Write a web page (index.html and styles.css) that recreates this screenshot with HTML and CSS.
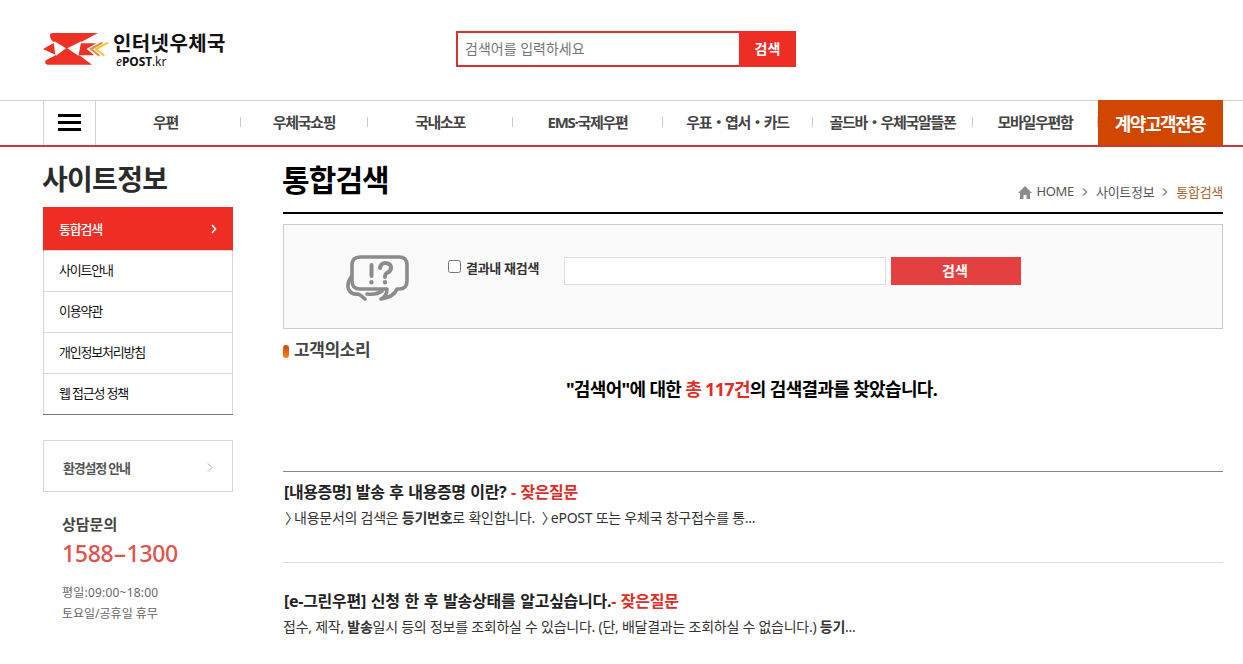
FILE: index.html
```
<!DOCTYPE html>
<html lang="ko">
<head>
    <meta charset="UTF-8">
    <meta name="viewport" content="width=device-width, initial-scale=1.0">
    <title>통합검색 - 인터넷우체국</title>
    <link rel="stylesheet" href="styles.css">
</head>
<body>
    <div class="header">
        <a class="logo" href="#">
            <svg class="logo-mark" viewBox="39 36 198 102" width="66" height="34">
                <path d="M66 39H204L152 67L110 88L66 62Q58 50 60 43Z" fill="#ee3124"/>
                <path d="M110 82L150 107L186 134H52Q42 131 47 121L74 107Z" fill="#ee3124"/>
                <path d="M39 87L71 69L76 104Z" fill="#ee3124"/>
                <path d="M150 70H200L174 87L192 106H146Z" fill="#ee3124"/>
                <path d="M73 64L108 85L78 107ZM154 64L112 85L145 107Z" fill="#fff"/>
                <path d="M206 68L173 87L198 106" fill="none" stroke="#fff" stroke-width="4"/>
                <path d="M217 68L183 87L208 107" fill="none" stroke="#f0803a" stroke-width="6"/>
                <path d="M234 68L198 87L223 107" fill="none" stroke="#f9c72d" stroke-width="6"/>
            </svg>
            <span class="logo-text">
                <b class="logo-name">인터넷우체국</b>
                <span class="logo-sub"><i>e</i><b>POST</b>.kr</span>
            </span>
        </a>
        <form class="top-search">
            <input type="text" placeholder="검색어를 입력하세요">
            <button type="button">검색</button>
        </form>
    </div>

    <div class="navbar">
        <a class="nav-all" href="#"><span></span><span></span><span></span></a>
        <a class="nav-first" href="#">우편</a>
        <a href="#">우체국쇼핑</a>
        <a href="#">국내소포</a>
        <a href="#">EMS·국제우편</a>
        <a href="#">우표・엽서・카드</a>
        <a href="#">골드바・우체국알뜰폰</a>
        <a href="#">모바일우편함</a>
        <a class="nav-contract" href="#">계약고객전용</a>
    </div>

    <div class="container">
        <div class="sidebar">
            <h2>사이트정보</h2>
            <ul class="side-menu">
                <li class="active"><a href="#">통합검색</a>
                    <svg width="6" height="10" viewBox="0 0 6 10"><path d="M1 1L4.5 5L1 9" fill="none" stroke="#fff" stroke-width="1.6"/></svg>
                </li>
                <li><a href="#">사이트안내</a></li>
                <li><a href="#">이용약관</a></li>
                <li><a href="#">개인정보처리방침</a></li>
                <li><a href="#">웹 접근성 정책</a></li>
            </ul>
            <a class="setting" href="#">환경설정 안내
                <svg width="6" height="9" viewBox="0 0 6 9"><path d="M1 .5L5 4.5L1 8.5" fill="none" stroke="#aaa"/></svg>
            </a>
            <div class="contact">
                <strong>상담문의</strong>
                <p class="tel">1588<span>-</span>1300</p>
                <p class="hours">평일:09:00~18:00</p>
                <p>토요일/공휴일 휴무</p>
            </div>
        </div>

        <div class="content">
            <div class="page-head">
                <h1>통합검색</h1>
                <div class="breadcrumb">
                    <svg class="home" width="14" height="13" viewBox="0 0 14 13"><path d="M7 0L14 7H12V13H8.5V9H5.5V13H2V7H0Z" fill="#8c8c8c"/></svg>
                    <a href="#">HOME</a>
                    <svg class="arrow" width="6" height="8" viewBox="0 0 6 8"><path d="M1 .7L4.5 4L1 7.3" fill="none" stroke="#999" stroke-width="1.7"/></svg>
                    <a href="#">사이트정보</a>
                    <svg class="arrow" width="6" height="8" viewBox="0 0 6 8"><path d="M1 .7L4.5 4L1 7.3" fill="none" stroke="#999" stroke-width="1.7"/></svg>
                    <a class="current" href="#">통합검색</a>
                </div>
            </div>

            <form class="search-box">
                <svg class="talk" width="64" height="48" viewBox="0 0 64 48" fill="none" stroke="#8c8c8c" stroke-width="3.6" stroke-linecap="round" stroke-linejoin="round">
                    <path d="M14 2H53Q61 2 61 10V26Q61 34 53 34H51Q48 42 35 44Q41 41 41 34H14Q6 34 6 26V10Q6 2 14 2Z"/>
                    <path d="M5 22Q0 30 3 35Q6 40 12 39Q15 40 19 44M21 39Q31 40 36 36"/>
                    <path d="M25.500 10V21" stroke-width="4"/>
                    <path d="M34 13Q35 8 39 8Q45 8 45 13Q45 16 41 18Q39 19 39 22" stroke-width="4"/>
                    <path d="M25.500 27.200V27.300M39 27.200V27.300" stroke-width="4.400"/>
                </svg>
                <label><input type="checkbox"> 결과내 재검색</label>
                <input class="keyword" type="text">
                <button type="button">검색</button>
            </form>

            <h3>고객의소리</h3>
            <p class="summary">"검색어"에 대한 <em>총 117건</em>의 검색결과를 찾았습니다.</p>

            <div class="result">
                <h4>[내용증명] 발송 후 내용증명 이란?<em> - 잦은질문</em></h4>
                <p class="guide"><span>〉</span>내용문서의 검색은 <b>등기번호</b>로 확인합니다. &nbsp;<span>〉</span>ePOST 또는 우체국 창구접수를 통...</p>
            </div>
            <div class="result">
                <h4>[e-그린우편] 신청 한 후 발송상태를 알고싶습니다.<em>- 잦은질문</em></h4>
                <p>접수, 제작, <b>발송</b>일시 등의 정보를 조회하실 수 있습니다. (단, 배달결과는 조회하실 수 없습니다.) <b>등기</b>...</p>
            </div>
        </div>
    </div>
</body>
</html>
```
FILE: styles.css
```
* {
    box-sizing: border-box;
}

body {
    margin: 0;
    font-family: "Noto Sans", "Noto Sans CJK KR", sans-serif;
    font-size: 13px;
    color: #333;
    background-color: #fff;
    overflow: hidden;
}

h1, h2, h3, h4, p, ul {
    margin: 0;
    padding: 0;
}

a {
    color: inherit;
    text-decoration: none;
}

em {
    font-style: normal;
    color: #e02d27;
}

button, input {
    font-family: inherit;
}

/* Header */
.header {
    display: flex;
    height: 100px;
    padding: 31px 0 0 43px;
}

.logo {
    display: flex;
    width: 413px;
    padding-top: 1px;
    color: #111;
}

.logo-text {
    margin-left: 4px;
}

.logo-name {
    display: block;
    font-size: 20px;
    line-height: 23px;
    letter-spacing: 0.4px;
}

.logo-sub {
    display: block;
    margin-left: 3px;
    font-size: 12px;
    line-height: 13px;
    letter-spacing: -0.1px;
}

.top-search {
    display: flex;
    width: 340px;
    height: 36px;
}

.top-search input {
    width: 283px;
    padding: 0 7px 2px;
    border: 2px solid #dc322d;
    border-right: 0;
    font-size: 14px;
}

.top-search input::placeholder {
    color: #757575;
}

.top-search button {
    width: 57px;
    padding: 0 0 2px;
    border: 0;
    background-color: #ee2e24;
    color: #fff;
    font-size: 14px;
    font-weight: bold;
}

/* Navigation */
.navbar {
    display: grid;
    grid-template-columns: 53px 145px 127px 145px 150px 150px 160px 125px 125px;
    height: 47px;
    padding-left: 43px;
    border-top: 1px solid #d2d2d2;
    border-bottom: 2px solid #c93a36;
}

.navbar a {
    display: flex;
    align-items: center;
    justify-content: center;
    padding: 0 1px 4px 0;
    background: linear-gradient(#ccc, #ccc) no-repeat right 16px / 1px 10px;
    font-size: 15px;
    font-weight: bold;
    letter-spacing: -1.3px;
    color: #444;
    white-space: nowrap;
}

.navbar .nav-first {
    padding-right: 6px;
}

.navbar .nav-all {
    flex-direction: column;
    gap: 4px;
    padding: 0 0 1px;
    border: 1px solid #d2d2d2;
    border-width: 0 1px;
    background: none;
}

.nav-all span {
    width: 23px;
    height: 3px;
    background-color: #000;
}

.navbar .nav-contract {
    margin: -1px 0 0;
    padding: 0 1px 0 0;
    background: #d14600;
    color: #fff;
    font-size: 18px;
    letter-spacing: -1.5px;
}

/* Page body */
.container {
    display: flex;
    gap: 50px;
    padding: 14px 20px 0 43px;
}

.sidebar {
    width: 190px;
}

.sidebar h2 {
    height: 46px;
    margin-left: -1px;
    font-size: 28px;
    line-height: 36px;
    letter-spacing: -0.7px;
    color: #2b2b2b;
}

.side-menu {
    list-style: none;
    border-bottom: 1px solid #777;
}

.side-menu li {
    display: flex;
    align-items: center;
    justify-content: space-between;
    height: 41px;
    padding: 0 15px 3px;
    border: 1px solid #d7d7d7;
    border-width: 0 1px 1px;
    color: #111;
    letter-spacing: -1.2px;
}

.side-menu li:last-child {
    height: 40px;
    border-bottom: 0;
}

.side-menu .active {
    height: 44px;
    padding-bottom: 0;
    border-color: #ee2e24 #ee2e24 #d7d7d7;
    background: #ee2e24 padding-box;
    color: #fff;
    font-weight: 500;
}

.setting {
    display: flex;
    align-items: center;
    justify-content: space-between;
    height: 52px;
    margin-top: 25px;
    padding: 2px 19px 0;
    border: 1px solid #d7d7d7;
    font-weight: bold;
    letter-spacing: -1.2px;
    color: #555;
}

.contact {
    padding: 22px 19px;
    font-size: 12px;
    line-height: 21px;
    color: #666;
}

.contact strong {
    display: block;
    font-size: 15px;
    color: #444;
}

.contact .tel {
    margin-bottom: 10px;
    font-size: 23px;
    line-height: 37px;
    font-weight: 500;
    letter-spacing: -0.3px;
    color: #e0534b;
}

/* Wide dash in the phone number */
.tel span {
    display: inline-block;
    margin: 0 3px;
    transform: scaleX(1.8);
}

.contact .hours {
    letter-spacing: 0.2px;
}

/* Content */
.content {
    width: 940px;
}

.page-head {
    display: flex;
    justify-content: space-between;
    height: 53px;
    border-bottom: 2px solid #000;
}

.page-head h1 {
    margin-left: -1px;
    font-size: 30px;
    line-height: 38px;
    letter-spacing: -0.9px;
    color: #000;
}

.breadcrumb {
    display: flex;
    align-items: center;
    height: 20px;
    margin-top: 20px;
    letter-spacing: -0.3px;
    color: #555;
}

.breadcrumb a {
    margin-left: 4px;
}

.breadcrumb .home {
    margin-top: 2px;
}

.breadcrumb .arrow {
    margin: 2px 4px 0 8px;
}

.breadcrumb .current {
    color: #a8642c;
}

.search-box {
    display: flex;
    height: 105px;
    margin-top: 10px;
    padding: 30px 0 0 62px;
    border: 1px solid #ccc;
    background-color: #fafafa;
}

.search-box label {
    display: flex;
    width: 116px;
    height: 26px;
    margin-left: 38px;
    line-height: 26px;
    font-weight: bold;
    letter-spacing: -0.3px;
    color: #333;
}

.search-box label input {
    width: 13px;
    height: 13px;
    margin: 5px 5px 0 0;
}

.search-box .keyword {
    width: 322px;
    height: 28px;
    margin: 2px 5px 0 0;
    border: 1px solid #ddd;
}

.search-box button {
    width: 130px;
    height: 28px;
    margin-top: 2px;
    padding: 0 2px 3px 0;
    border: 0;
    background-color: #e34141;
    color: #fff;
    font-size: 14px;
    font-weight: bold;
}

.content h3 {
    display: flex;
    align-items: center;
    height: 40px;
    padding-bottom: 2px;
    font-size: 17px;
    letter-spacing: -0.4px;
    color: #444;
}

/* Orange bullet before the section title */
.content h3::before {
    content: "";
    width: 6px;
    height: 13px;
    margin: 6px 5px 0 0;
    border-radius: 3px;
    background: linear-gradient(#c84a10, #ff7f10);
}

.summary {
    height: 102px;
    padding: 6px 3px 0 0;
    font-size: 18px;
    line-height: 28px;
    font-weight: bold;
    letter-spacing: -0.67px;
    text-align: center;
    color: #000;
}

.result {
    height: 91px;
    padding: 7px 0 0 1px;
    border-top: 1px solid #888;
    white-space: nowrap;
}

.result + .result {
    padding-top: 25px;
    border-color: #ddd;
}

.result h4 {
    font-size: 16px;
    line-height: 26px;
    letter-spacing: -0.4px;
    word-spacing: 1px;
    color: #222;
}

.result + .result h4 {
    letter-spacing: -0.28px;
}

.result p {
    margin-left: -1px;
    font-size: 14px;
    line-height: 26px;
    letter-spacing: -0.25px;
}

.result .guide {
    padding-left: 2px;
}

.guide span {
    letter-spacing: -5px;
}
```
